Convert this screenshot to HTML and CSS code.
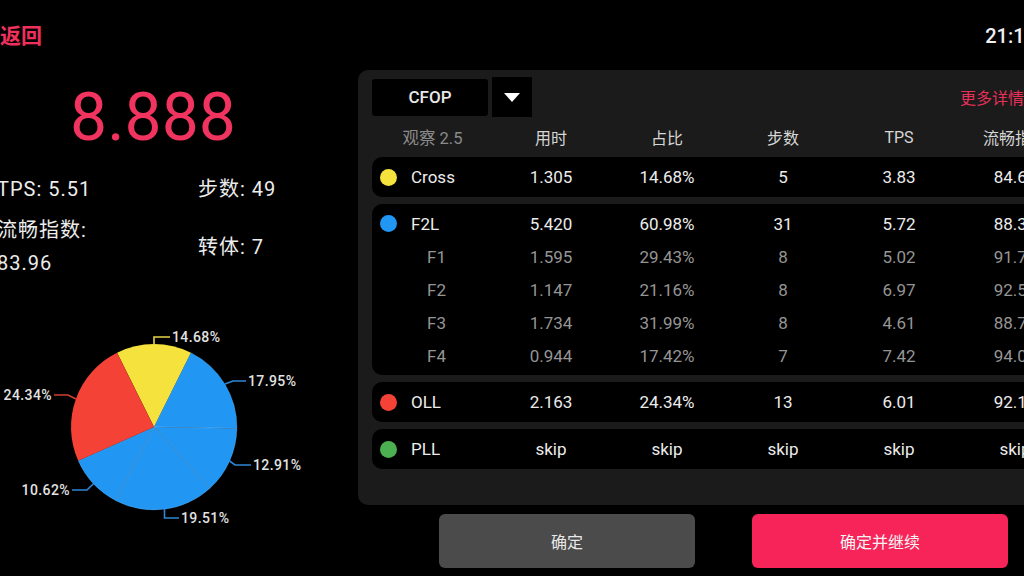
FILE: index.html
```html
<!DOCTYPE html>
<html lang="zh">
<head>
<meta charset="utf-8">
<title>CFOP 分析</title>
<link rel="stylesheet" href="styles.css">
</head>
<body>
<div class="screen">
  <div class="left">
    <div class="back">返回</div>
    <div class="big">8.888</div>
    <div class="stats">
      <div class="stat">TPS: 5.51</div>
      <div class="stat">步数: 49</div>
      <div class="stat">流畅指数: 83.96</div>
      <div class="stat mid">转体: 7</div>
    </div>
    <svg class="pie" width="358" height="220" viewBox="0 0 358 220">
      <g class="slices">
        <path fill="#f6e23c" d="M154,107 L117.07,32.67 A83,83 0 0,1 190.93,32.67 Z"/>
        <path class="blue" d="M154,107 L190.93,32.67 A83,83 0 0,1 236.99,108.51 Z"/>
        <path class="blue" d="M154,107 L236.99,108.51 A83,83 0 0,1 210.05,168.21 Z"/>
        <path class="blue" d="M154,107 L210.05,168.21 A83,83 0 0,1 115.34,180.45 Z"/>
        <path class="blue" d="M154,107 L115.34,180.45 A83,83 0 0,1 78.19,140.77 Z"/>
        <path fill="#f44336" d="M154,107 L78.19,140.77 A83,83 0 0,1 117.07,32.67 Z"/>
      </g>
      <g class="leaders" fill="none" stroke-width="1.6">
        <polyline stroke="#e8d443" points="154,25 154,17 170,17"/>
        <polyline stroke="#2f86d6" points="225,64 233,61 246,61"/>
        <polyline stroke="#2f86d6" points="229.6,141 235,145 251,145"/>
        <polyline stroke="#2f86d6" points="164.5,189 164.5,198 179,198"/>
        <polyline stroke="#2f86d6" points="93.4,163.7 87,170 72,170"/>
        <polyline stroke="#d0402f" points="75.9,79 68,75 54,75"/>
      </g>
      <g class="labels">
        <text x="172" y="22">14.68%</text>
        <text x="248" y="66">17.95%</text>
        <text x="253" y="150">12.91%</text>
        <text x="181" y="203">19.51%</text>
        <text x="70" y="175" text-anchor="end">10.62%</text>
        <text x="52" y="80" text-anchor="end">24.34%</text>
      </g>
    </svg>
  </div>
  <div class="right">
    <div class="clock-row"><span class="clock">21:15</span></div>
    <div class="panel">
      <div class="panel-head">
        <div class="method">CFOP</div>
        <div class="drop"><svg width="16" height="9" viewBox="0 0 16 9"><path d="M0,0 L16,0 L8,9 Z" fill="#fff"/></svg></div>
        <div class="more">更多详情</div>
      </div>
      <div class="row head">
        <div class="c name observe">观察 2.5</div>
        <div class="c">用时</div>
        <div class="c">占比</div>
        <div class="c">步数</div>
        <div class="c">TPS</div>
        <div class="c">流畅指数</div>
      </div>
      <div class="list">
        <div class="block">
          <div class="row main">
            <div class="c name"><span class="dot yellow"></span>Cross</div>
            <div class="c">1.305</div><div class="c">14.68%</div><div class="c">5</div><div class="c">3.83</div><div class="c">84.65</div>
          </div>
        </div>
        <div class="block group">
          <div class="row main sm">
            <div class="c name"><span class="dot blue"></span>F2L</div>
            <div class="c">5.420</div><div class="c">60.98%</div><div class="c">31</div><div class="c">5.72</div><div class="c">88.31</div>
          </div>
          <div class="row sub sm">
            <div class="c name">F1</div>
            <div class="c">1.595</div><div class="c">29.43%</div><div class="c">8</div><div class="c">5.02</div><div class="c">91.72</div>
          </div>
          <div class="row sub sm">
            <div class="c name">F2</div>
            <div class="c">1.147</div><div class="c">21.16%</div><div class="c">8</div><div class="c">6.97</div><div class="c">92.51</div>
          </div>
          <div class="row sub sm">
            <div class="c name">F3</div>
            <div class="c">1.734</div><div class="c">31.99%</div><div class="c">8</div><div class="c">4.61</div><div class="c">88.72</div>
          </div>
          <div class="row sub sm">
            <div class="c name">F4</div>
            <div class="c">0.944</div><div class="c">17.42%</div><div class="c">7</div><div class="c">7.42</div><div class="c">94.03</div>
          </div>
        </div>
        <div class="block">
          <div class="row main">
            <div class="c name"><span class="dot red"></span>OLL</div>
            <div class="c">2.163</div><div class="c">24.34%</div><div class="c">13</div><div class="c">6.01</div><div class="c">92.14</div>
          </div>
        </div>
        <div class="block">
          <div class="row main">
            <div class="c name"><span class="dot green"></span>PLL</div>
            <div class="c">skip</div><div class="c">skip</div><div class="c">skip</div><div class="c">skip</div><div class="c">skip</div>
          </div>
        </div>
      </div>
    </div>
    <div class="actions">
      <button class="btn gray">确定</button>
      <button class="btn pink">确定并继续</button>
    </div>
  </div>
</div>
</body>
</html>
```

FILE: styles.css
```css
* { box-sizing: border-box; }
html, body { margin: 0; padding: 0; background: #000; }
body {
  font-family: Roboto, "Noto Sans CJK SC", sans-serif;
  color: #e6e6e6;
}
.screen {
  width: 1024px;
  height: 576px;
  overflow: hidden;
  display: flex;
  background: #000;
}
.left {
  flex: 0 0 358px;
  width: 358px;
  display: flex;
  flex-direction: column;
}
.back {
  margin-top: 24px;
  height: 24px;
  line-height: 24px;
  font-size: 21px;
  font-weight: 700;
  color: #f0305c;
}
.big {
  margin-top: 37px;
  width: 306px;
  text-align: center;
  font-size: 66px;
  line-height: 66px;
  color: #f0335f;
}
.stats {
  margin-top: 22px;
  margin-left: -3px;
  display: grid;
  grid-template-columns: 120px auto;
  column-gap: 81px;
  row-gap: 8px;
  font-size: 20px;
  line-height: 33px;
  letter-spacing: 1px;
  color: #ececec;
}
.stat.mid { align-self: center; }
.pie {
  display: block;
  margin-top: 40px;
}
.pie .blue { fill: #2196f3; stroke: rgba(255,255,255,0.12); stroke-width: 1; }
.pie .labels text {
  font-family: Roboto, sans-serif;
  font-size: 14px;
  font-weight: 500;
  fill: #e2e2e2;
  letter-spacing: 0.4px;
}
.right {
  flex: 0 0 730px;
  width: 730px;
  display: flex;
  flex-direction: column;
}
.clock-row {
  height: 70px;
  display: flex;
  justify-content: flex-end;
  padding-top: 24px;
  padding-right: 52px;
}
.clock {
  font-size: 20px;
  line-height: 24px;
  font-weight: 500;
  color: #f0f0f0;
}
.panel {
  background: #1b1b1b;
  border-radius: 10px;
  padding: 7px 14px 35px 14px;
  height: 435px;
}
.panel-head {
  display: flex;
  align-items: center;
  height: 40px;
}
.method {
  width: 116px;
  height: 37px;
  background: #000;
  border-radius: 3px;
  display: flex;
  align-items: center;
  justify-content: center;
  font-size: 17px;
  font-weight: 500;
  color: #e8e8e8;
}
.drop {
  margin-left: 4px;
  width: 40px;
  height: 40px;
  background: #000;
  display: flex;
  align-items: center;
  justify-content: center;
}
.more {
  margin-left: 428px;
  font-size: 16px;
  color: #e8305a;
  white-space: nowrap;
}
.row {
  display: flex;
  align-items: center;
  height: 40px;
}
.row .c {
  flex: 0 0 116px;
  width: 116px;
  text-align: center;
  font-size: 17px;
  white-space: nowrap;
}
.row .c.name {
  flex: 0 0 121px;
  width: 121px;
  text-align: left;
  display: flex;
  align-items: center;
}
.row.head .c { font-size: 16px; color: #d6d6d6; }
.row.head .c.observe { justify-content: center; color: #8a8a8a; font-size: 16.5px; }
.list {
  display: flex;
  flex-direction: column;
  gap: 7px;
}
.block {
  background: #000;
  border-radius: 10px;
}
.group { padding: 3px 0 3px 0; }
.row.sm { height: 33px; }
.row.main .c { color: #ececec; }
.row.sub .c { color: #959595; }
.row.sub .c.name { padding-left: 55px; }
.dot {
  width: 17px;
  height: 17px;
  border-radius: 50%;
  margin-left: 8px;
  margin-right: 14px;
  flex: 0 0 17px;
}
.dot.yellow { background: #f6e23c; }
.dot.blue { background: #2196f3; }
.dot.red { background: #f44336; }
.dot.green { background: #4caf50; }
.actions {
  margin-top: 9px;
  display: flex;
  gap: 57px;
  padding-left: 81px;
}
.btn {
  width: 256px;
  height: 54px;
  border: none;
  border-radius: 6px;
  font-family: "Noto Sans CJK SC", sans-serif;
  font-size: 16px;
  color: #e8e8e8;
}
.btn.gray { background: #4b4b4b; }
.btn.pink { background: #f7245a; color: #f4f4f4; }
```
